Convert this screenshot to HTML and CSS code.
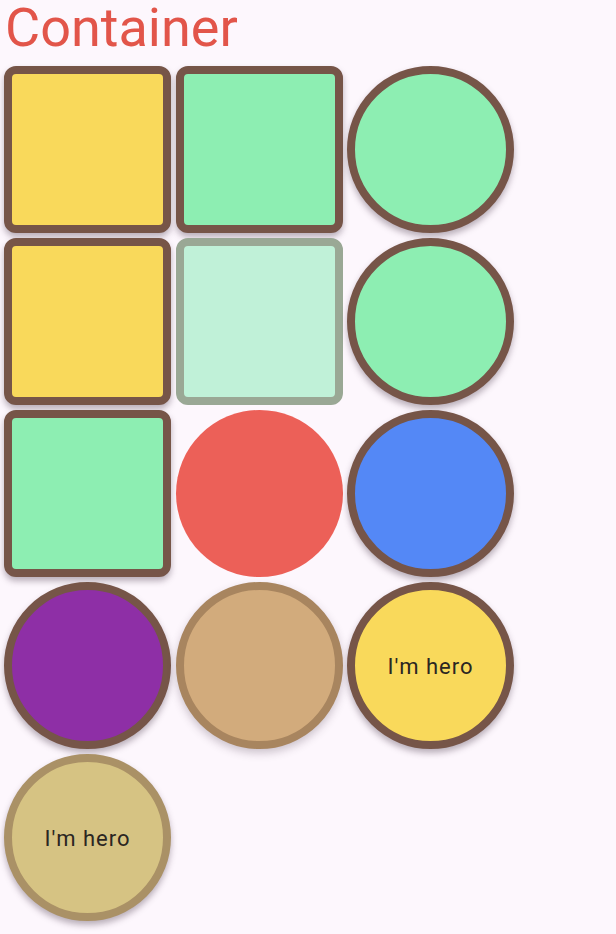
FILE: index.html
```html
<!DOCTYPE html>
<html>
<head>
<meta charset="utf-8">
<link rel="stylesheet" href="styles.css">
</head>
<body>
<h1 class="title">Container</h1>
<div class="grid">
  <div class="tile box yellow"></div>
  <div class="tile box green"></div>
  <div class="tile circle green"></div>

  <div class="tile box yellow"></div>
  <div class="tile box faded"></div>
  <div class="tile circle green"></div>

  <div class="tile box green"></div>
  <div class="tile circle red"></div>
  <div class="tile circle blue"></div>

  <div class="tile circle purple"></div>
  <div class="tile circle tan"></div>
  <div class="tile circle yellow hero"><span>I'm hero</span></div>

  <div class="tile circle pale hero"><span>I'm hero</span></div>
</div>
</body>
</html>
```
FILE: styles.css
```css
html, body {
  margin: 0;
  padding: 0;
  background: #fdf7fd;
}
body {
  font-family: Roboto, "Liberation Sans", sans-serif;
  width: 616px;
  height: 934px;
  overflow: hidden;
}
.title {
  margin: 0;
  padding: 0 0 0 5px;
  height: 66px;
  font-size: 54px;
  font-weight: 400;
  line-height: 56px;
  color: #e2554a;
}
.grid {
  display: grid;
  grid-template-columns: repeat(3, 167px);
  grid-auto-rows: 167px;
  column-gap: 4.5px;
  row-gap: 5px;
  padding-left: 4px;
}
.tile {
  box-sizing: border-box;
  border: 8px solid #765548;
  box-shadow: 0 4px 6px rgba(60, 40, 60, 0.35);
  display: flex;
  align-items: center;
  justify-content: center;
}
.box { border-radius: 12px; }
.circle { border-radius: 50%; }
.yellow { background: #f9d95b; }
.green { background: #8deeb2; }
.faded {
  background: #c0f1d8;
  border-color: #9aa895;
  box-shadow: none;
}
.red {
  background: #ec6058;
  border: none;
  box-shadow: none;
}
.blue { background: #5488f6; }
.purple { background: #8e2fa6; }
.tan {
  background: #d2ab7c;
  border-color: #a8855f;
  box-shadow: 0 4px 8px rgba(60, 40, 60, 0.25);
}
.pale {
  background: #d6c383;
  border-color: #aa9166;
}
.hero span {
  font-size: 22px;
  letter-spacing: 1px;
  color: #2b2622;
  margin-top: 2px;
}
```
